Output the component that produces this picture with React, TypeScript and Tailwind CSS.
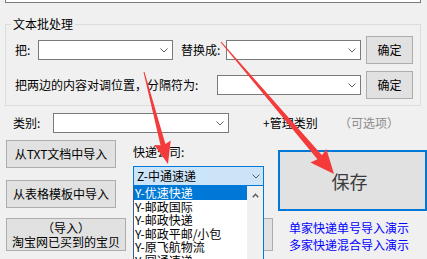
import React from "react";

function Chevron({ color = "#606060" }: { color?: string }) {
  return (
    <svg width="8" height="5" viewBox="0 0 8 5" className="shrink-0">
      <polyline points="0.5,0.5 4,4 7.5,0.5" fill="none" stroke={color} strokeWidth="1" />
    </svg>
  );
}

function Combo({ className = "" }: { className?: string }) {
  return (
    <div className={"flex items-center justify-end h-[20px] border border-[#7a7a7a] bg-white pr-[4px] shrink-0 " + className}>
      <Chevron />
    </div>
  );
}

function Btn({ className = "", children }: { className?: string; children?: React.ReactNode }) {
  return (
    <div className={"flex items-center justify-center border border-[#adadad] bg-[#e1e1e1] shrink-0 " + className}>
      {children}
    </div>
  );
}

function arrowPoints(x1: number, y1: number, x2: number, y2: number, w0: number, w1: number, hl: number, hw: number) {
  const dx = x2 - x1;
  const dy = y2 - y1;
  const L = Math.hypot(dx, dy);
  const ux = dx / L;
  const uy = dy / L;
  const px = -uy;
  const py = ux;
  const bx = x2 - ux * hl;
  const by = y2 - uy * hl;
  const pts = [
    [x1 + (px * w0) / 2, y1 + (py * w0) / 2],
    [bx + (px * w1) / 2, by + (py * w1) / 2],
    [bx + (px * hw) / 2 - ux * 2, by + (py * hw) / 2 - uy * 2],
    [x2, y2],
    [bx - (px * hw) / 2 - ux * 2, by - (py * hw) / 2 - uy * 2],
    [bx - (px * w1) / 2, by - (py * w1) / 2],
    [x1 - (px * w0) / 2, y1 - (py * w0) / 2],
  ];
  return pts.map((p) => p[0].toFixed(1) + "," + p[1].toFixed(1)).join(" ");
}

const items = ["Y-优速快递", "Y-邮政国际", "Y-邮政快递", "Y-邮政平邮/小包", "Y-原飞航物流", "Y-圆通速递"];

export default function App() {
  return (
    <div className="relative w-[427px] h-[259px] overflow-hidden bg-[#f0f0f0] text-[12px] leading-[16px] text-black font-['Noto_Sans_CJK_SC',sans-serif]">
      {/* top control edge */}
      <div className="ml-[5px] w-[416px] h-[3px] border-x border-b border-[#7a7a7a] bg-white" />

      {/* group box */}
      <div className="relative mt-[21px] ml-[5px] w-[416px] h-[82px] border border-[#dcdcdc] pt-[11px] pl-[9px] pr-[7px] pb-[6px]">
        <span className="absolute left-[5px] top-[-9px] px-[2px] bg-[#f0f0f0] leading-[16px]">文本批处理</span>
        <div className="flex items-center h-[28px]">
          <span className="w-[23px] shrink-0">把:</span>
          <Combo className="w-[135px]" />
          <span className="ml-[8px] w-[45px] shrink-0 whitespace-nowrap">替换成:</span>
          <Combo className="w-[135px]" />
          <Btn className="ml-[5px] w-[47px] h-[28px]">确定</Btn>
        </div>
        <div className="mt-[7px] flex items-center h-[28px]">
          <span className="w-[202px] shrink-0 whitespace-nowrap">把两边的内容对调位置，分隔符为:</span>
          <Combo className="w-[144px]" />
          <Btn className="ml-[5px] w-[47px] h-[28px]">确定</Btn>
        </div>
      </div>

      {/* category row */}
      <div className="mt-[7px] ml-[13px] flex items-center h-[20px]">
        <span className="w-[40px] shrink-0">类别:</span>
        <Combo className="w-[176px]" />
        <span className="ml-[34px] w-[76px] shrink-0 whitespace-nowrap">+管理类别</span>
        <span className="whitespace-nowrap text-[#8c8c8c]">（可选项）</span>
      </div>

      {/* lower area */}
      <div className="mt-[7px] flex">
        <div className="ml-[6px] w-[120px] flex flex-col shrink-0">
          <Btn className="w-[110px] h-[28px]">从TXT文档中导入</Btn>
          <Btn className="mt-[12px] w-[110px] h-[28px]">从表格模板中导入</Btn>
          <Btn className="mt-[10px] w-[120px] h-[33px] flex-col leading-[14px]">
            <span>（导入）</span>
            <span className="whitespace-nowrap">淘宝网已买到的宝贝</span>
          </Btn>
        </div>

        <div className="ml-[7px] w-[140px] flex flex-col shrink-0">
          <span className="mt-[4px] h-[16px] whitespace-nowrap">快递公司:</span>
          <div className="relative mt-[6px] w-[131px]">
            <div className="flex items-center justify-between h-[20px] border border-[#0078d7] bg-[#cce4f7] pl-[3px] pr-[3px]">
              <span className="whitespace-nowrap">Z-中通速递</span>
              <Chevron />
            </div>
            <div className="absolute left-0 top-full z-10 w-[131px] h-[80px] flex bg-white border-x border-l-[#3b5f8a] border-r-[#0078d7]">
              <div className="w-[113px] flex flex-col">
                {items.map((t, i) => (
                  <div
                    key={t}
                    className={
                      "h-[13.5px] leading-[13.5px] pl-[1px] whitespace-nowrap " +
                      (i === 0 ? "bg-[#0078d7] text-white" : "text-black")
                    }
                  >
                    {t}
                  </div>
                ))}
              </div>
              <div className="w-[16px] bg-[#f0f0f0] flex justify-center pt-[7px]">
                <svg width="7" height="5" viewBox="0 0 7 5">
                  <polyline points="0.8,4.2 3.5,1.3 6.2,4.2" fill="none" stroke="#606060" strokeWidth="1.6" />
                </svg>
              </div>
            </div>
          </div>
          <Btn className="mt-[32px] w-[140px] h-[33px]" />
        </div>

        <div className="ml-[5px] w-[149px] flex flex-col shrink-0">
          <div className="mt-[10px] h-[61px] border-2 border-[#0078d7] bg-[#e1e1e1] flex items-center justify-center pr-[6px] text-[18px] leading-[24px] text-[#3a3a3a]">
            保存
          </div>
          <div className="mt-[8px] pl-[11px] leading-[17px] text-[#0000ff] whitespace-nowrap">
            <div>单家快递单号导入演示</div>
            <div>多家快递混合导入演示</div>
          </div>
        </div>
      </div>

      {/* annotation arrows */}
      <svg className="absolute left-0 top-0 pointer-events-none z-20" width="427" height="259" viewBox="0 0 427 259">
        <polygon points={arrowPoints(144, 72, 168, 164, 1, 5, 20, 17)} fill="#f43b3b" />
        <polygon points={arrowPoints(221, 42, 334, 174, 1, 6, 22, 21)} fill="#f43b3b" />
      </svg>
    </div>
  );
}
